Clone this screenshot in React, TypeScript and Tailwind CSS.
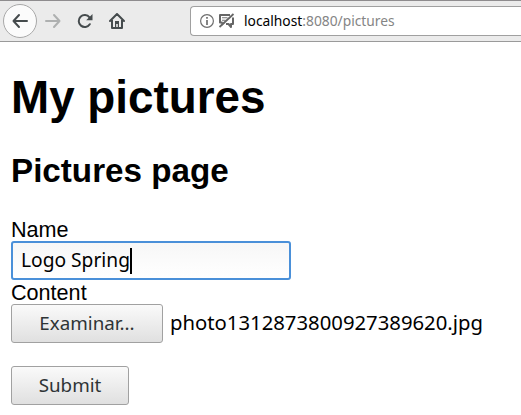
const uiFont = "font-['Noto_Sans','Open_Sans',sans-serif]";

function Toolbar() {
  return (
    <header className="flex h-[42px] shrink-0 items-center overflow-hidden border-t border-b border-t-[#8e8c8e] border-b-[#9a9a9a] bg-[#ebebeb] pl-[3px]">
      <button aria-label="Back" className="flex size-[34px] shrink-0 items-center justify-center rounded-full border border-[#a8a8a8] bg-[#fbfbfb]">
        <svg width="16" height="16" viewBox="0 0 16 16" fill="none" stroke="#454b4d" strokeWidth="2" strokeLinecap="round" strokeLinejoin="round">
          <path d="M15 8H1.5M7 2L1.5 8L7 14" />
        </svg>
      </button>
      <button aria-label="Forward" className="ml-2 shrink-0">
        <svg width="16" height="16" viewBox="0 0 16 16" fill="none" stroke="#aeb0b0" strokeWidth="2" strokeLinecap="round" strokeLinejoin="round">
          <path d="M1 8H14.5M9 2L14.5 8L9 14" />
        </svg>
      </button>
      <button aria-label="Reload" className="ml-4 shrink-0">
        <svg width="16" height="16" viewBox="0 0 16 16" fill="none" stroke="#454b4d" strokeWidth="2">
          <path d="M12.8 11.2A6 6 0 1 1 12.5 4.3" strokeLinecap="round" />
          <path d="M15.5 1V7.2H9.2Z" fill="#454b4d" stroke="none" />
        </svg>
      </button>
      <button aria-label="Home" className="ml-4 shrink-0">
        <svg width="16" height="16" viewBox="0 0 16 16" fill="none" stroke="#454b4d" strokeWidth="2" strokeLinecap="round" strokeLinejoin="round">
          <path d="M1 8L8 1L15 8M3 7V15H13V7" />
          <path d="M6 8H10V14H8.8V11H7.2V14H6Z" fill="#454b4d" stroke="none" />
        </svg>
      </button>
      <div className="ml-[65px] flex h-[30px] w-[345px] shrink-0 items-center rounded-l-[4px] border border-r-0 border-[#a0a0a0] bg-white pl-[9px]">
        <svg width="14" height="14" viewBox="0 0 14 14" fill="none" stroke="#6f6f6f" className="shrink-0">
          <circle cx="7" cy="7" r="6.4" strokeWidth="1.2" />
          <path d="M7 6V11M7 3V4.7" strokeWidth="1.7" />
        </svg>
        <svg width="17" height="16" viewBox="0 0 17 16" className="ml-[4px] shrink-0" fill="none">
          <path d="M12 2H2V9.5H4.5" stroke="#666" strokeWidth="2" strokeLinejoin="round" />
          <path d="M4 4.8H9.5M4 7.2H7.5" stroke="#777" strokeWidth="1.1" />
          <path d="M1.5 14L15.5 1" stroke="#666" strokeWidth="1.8" />
          <path d="M3.5 9V13L7 10" fill="#666" />
          <path d="M15 4.5V11H13V14L10.5 11H8" stroke="#666" strokeWidth="2" strokeLinejoin="round" />
        </svg>
        <span className={`ml-[9px] text-[13.8px] leading-5 whitespace-nowrap text-[#858585] ${uiFont}`}>
          <span className="text-black">localhost</span>:8080/pictures
        </span>
      </div>
    </header>
  );
}

const button =
  "flex h-[39px] items-center justify-center rounded-[3px] border border-[#a1a1a1] bg-linear-to-b from-[#fafafa] to-[#e0e0e0] text-[18.8px] text-[#2e3436]";

export default function App() {
  return (
    <div className="flex h-[415px] w-[521px] flex-col overflow-hidden bg-white text-black">
      <Toolbar />
      <main className="flex flex-col items-start pl-[11px] font-['Liberation_Sans',Arial,sans-serif] text-[21.6px] leading-[25px]">
        <h1 className="mt-[30px] text-[45.8px] leading-[52px] font-bold">My pictures</h1>
        <h2 className="mt-7 text-[33.2px] leading-[38px] font-bold">Pictures page</h2>
        <form className="mt-[27px] flex flex-col items-start">
          <label className="h-6">Name</label>
          <div className={`flex h-[39px] w-[280px] items-center rounded-[3px] border-2 border-[#4a90d9] bg-linear-to-b from-[#f7f7f7] to-white pl-2 text-[19.2px] ${uiFont}`}>
            <span className="pb-0.5">Logo Spring</span>
            <span className="h-[26px] w-[2px] bg-black" />
          </div>
          <label className="h-6">Content</label>
          <div className={`flex items-center ${uiFont}`}>
            <button type="button" className={`w-[152px] ${button}`}>Examinar...</button>
            <span className="ml-[7px] pb-0.5 text-[20.3px] whitespace-nowrap">photo1312873800927389620.jpg</span>
          </div>
          <button type="button" className={`mt-[23px] w-[118px] ${uiFont} ${button}`}>Submit</button>
        </form>
      </main>
    </div>
  );
}
